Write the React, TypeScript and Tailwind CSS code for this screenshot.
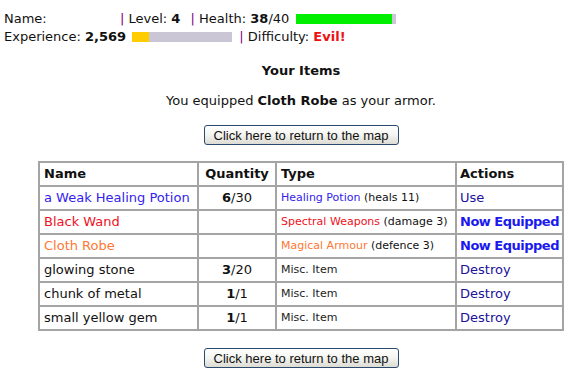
const verdana = "font-['DejaVu_Sans',Verdana,sans-serif]";

type Item = {
  name: string;
  nameColor: string;
  qty?: [string, string];
  type: string;
  typeColor: string;
  extra?: string;
  action: string;
  equipped?: boolean;
};

const items: Item[] = [
  { name: "a Weak Healing Potion", nameColor: "text-[#3322ee]", qty: ["6", "30"], type: "Healing Potion", typeColor: "text-[#3322ee]", extra: "(heals 11)", action: "Use" },
  { name: "Black Wand", nameColor: "text-[#ee1122]", type: "Spectral Weapons", typeColor: "text-[#ee1122]", extra: "(damage 3)", action: "Now Equipped", equipped: true },
  { name: "Cloth Robe", nameColor: "text-[#ff7733]", type: "Magical Armour", typeColor: "text-[#ff7733]", extra: "(defence 3)", action: "Now Equipped", equipped: true },
  { name: "glowing stone", nameColor: "text-[#111111]", qty: ["3", "20"], type: "Misc. Item", typeColor: "text-[#222222]", action: "Destroy" },
  { name: "chunk of metal", nameColor: "text-[#111111]", qty: ["1", "1"], type: "Misc. Item", typeColor: "text-[#222222]", action: "Destroy" },
  { name: "small yellow gem", nameColor: "text-[#111111]", qty: ["1", "1"], type: "Misc. Item", typeColor: "text-[#222222]", action: "Destroy" },
];

function Bar({ fill, color }: { fill: number; color: string }) {
  return (
    <span className="inline-flex h-[10px] w-[100px] bg-[#cac6d6]">
      <span className={`h-full ${color}`} style={{ width: `${fill}%` }} />
    </span>
  );
}

function MapButton() {
  return (
    <button
      type="button"
      className="h-[20px] w-[195px] rounded-[3px] border border-[#2c4a6e] bg-gradient-to-b from-white via-[#f4f4f0] to-[#dcdcd4] font-['Liberation_Sans',Arial,sans-serif] text-[13px] leading-none text-[#111111]"
    >
      Click here to return to the map
    </button>
  );
}

const cell = "border-2 border-[#a4a4a4] px-[4px] h-[24px] whitespace-nowrap overflow-hidden";

export default function App() {
  return (
    <div className={`${verdana} w-[585px] h-[377px] bg-white text-[13px] text-[#111111] overflow-hidden`}>
      {/* stats */}
      <div className="pl-[4px] pt-[10px] leading-[18px]">
        <div className="flex items-center whitespace-pre">
          <span className="w-[116px]">Name:</span>
          <span className="text-[#800080]">|</span>
          <span> Level: <b>4</b> </span>
          <span className="ml-[6px] text-[#800080]">|</span>
          <span> Health: <b>38</b>/40 </span>
          <span className="ml-[3px] flex">
            <Bar fill={96} color="bg-[#00ee00]" />
          </span>
        </div>
        <div className="flex items-center whitespace-pre">
          <span>Experience: <b>2,569</b> </span>
          <span className="ml-[2px] flex">
            <Bar fill={17} color="bg-[#ffcc00]" />
          </span>
          <span className="w-[7px]" />
          <span className="text-[#800080]">|</span>
          <span> Difficulty: </span>
          <b className="text-[#ee1111]">Evil!</b>
        </div>
      </div>

      {/* main */}
      <div className="flex flex-col items-center pl-[17px]">
        <h2 className="mt-[17px] text-[13px] font-bold leading-[16px]">Your Items</h2>
        <p className="mt-[14px] leading-[16px]">
          You equipped <b>Cloth Robe</b> as your armor.
        </p>
        <div className="mt-[16px] flex">
          <MapButton />
        </div>
        <table className="mt-[16px] w-[526px] table-fixed border-collapse border-2 border-[#a4a4a4]">
          <colgroup>
            <col className="w-[159px]" />
            <col className="w-[78px]" />
            <col className="w-[180px]" />
            <col />
          </colgroup>
          <thead>
            <tr className="text-left font-bold">
              <th className={cell}>Name</th>
              <th className={`${cell} text-center`}>Quantity</th>
              <th className={cell}>Type</th>
              <th className={`${cell} pl-[3px]`}>Actions</th>
            </tr>
          </thead>
          <tbody>
            {items.map((it) => (
              <tr key={it.name}>
                <td className={`${cell} ${it.nameColor}`}>{it.name}</td>
                <td className={`${cell} text-center`}>
                  {it.qty && (
                    <>
                      <b>{it.qty[0]}</b>/{it.qty[1]}
                    </>
                  )}
                </td>
                <td className={`${cell} text-[11px]`}>
                  <span className={it.typeColor}>{it.type}</span>
                  {it.extra && <span> {it.extra}</span>}
                </td>
                <td className={`${cell} pl-[3px] pr-0`}>
                  {it.equipped ? (
                    <b className="tracking-[-0.5px] text-[#1a1aee]">{it.action}</b>
                  ) : (
                    <span className="text-[#22119a]">{it.action}</span>
                  )}
                </td>
              </tr>
            ))}
          </tbody>
        </table>
        <div className="mt-[17px] flex">
          <MapButton />
        </div>
      </div>
    </div>
  );
}
